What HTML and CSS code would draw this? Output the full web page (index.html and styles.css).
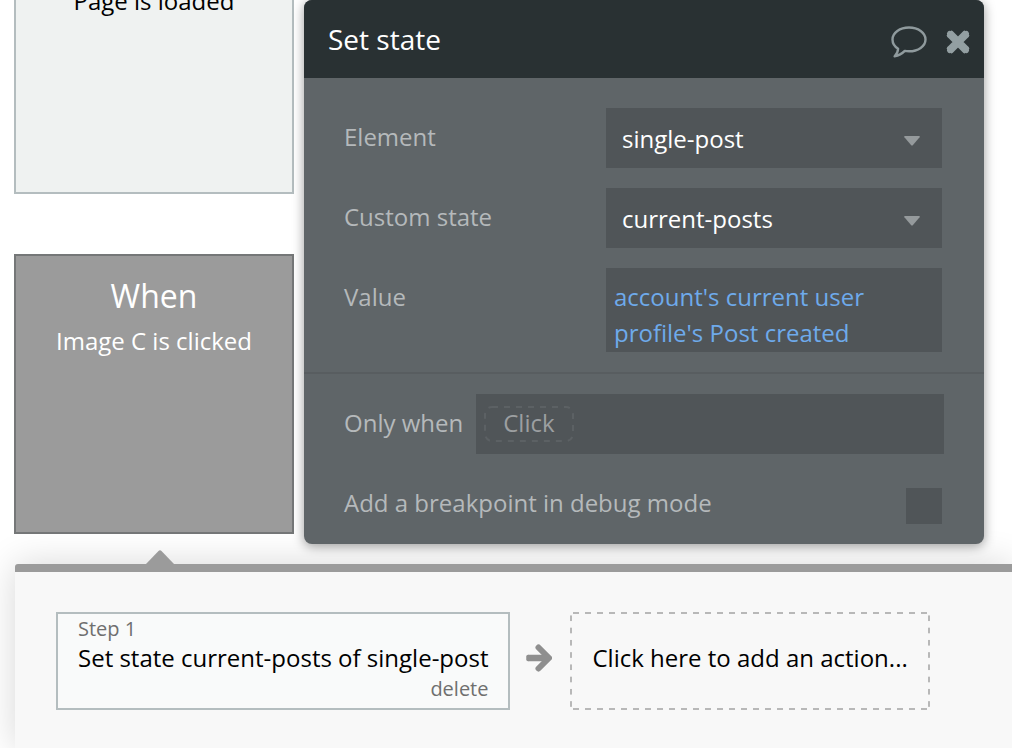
FILE: index.html
```html
<!DOCTYPE html>
<html lang="en">
<head>
<meta charset="utf-8">
<title>Workflow editor</title>
<link rel="stylesheet" href="styles.css">
</head>
<body>
<main class="workspace">
  <section class="events">
    <article class="event event-first">
      <p class="event-text">Page is loaded</p>
    </article>
    <article class="event event-selected">
      <h2 class="event-title">When</h2>
      <p class="event-text">Image C is clicked</p>
    </article>
  </section>

  <form class="editor">
    <header class="editor-header">
      <h1 class="editor-title">Set state</h1>
      <button class="icon-button" type="button" aria-label="Comment">
        <svg width="36" height="32" viewBox="0 0 36 32" fill="none" stroke="#8f9a9d" stroke-width="2.4" stroke-linejoin="round">
          <path d="M18 1.500C27.200 1.500 34.500 6.800 34.500 13.500S27.200 25.300 18 25.300c-1.500 0-2.900-.1-4.200-.4C11 27.800 7.600 29.600 3.600 30.300c1.900-1.700 3.300-4.300 3.500-7.500C3.600 20.600 1.500 17.200 1.500 13.500 1.500 6.800 8.800 1.500 18 1.500z"/>
        </svg>
      </button>
      <button class="icon-button" type="button" aria-label="Close">
        <svg width="26" height="26" viewBox="0 0 26 26" stroke="#939fa2" stroke-width="8">
          <path d="M5 5l16 16M21 5L5 21" stroke-linecap="butt"/>
          <path d="M4.500 4.500l17 17M21.500 4.500l-17 17" stroke-width="5" stroke-linecap="round"/>
          <path d="M3.500 6.500l3-3M19.500 3.500l3 3M22.500 19.500l-3 3M6.500 22.500l-3-3" stroke-width="3.600" stroke-linecap="round"/>
        </svg>
      </button>
    </header>

    <div class="fields">
      <div class="field">
        <label for="element">Element</label>
        <div class="select-wrap">
          <select id="element"><option>single-post</option></select>
          <svg class="caret" width="16" height="10" viewBox="0 0 16 10" fill="#959a9c"><path d="M1 0h14q1.500 0 .6 1.200L9 9q-1 1-2 0L.4 1.200Q-.5 0 1 0z"/></svg>
        </div>
      </div>
      <div class="field">
        <label for="state">Custom state</label>
        <div class="select-wrap">
          <select id="state"><option>current-posts</option></select>
          <svg class="caret" width="16" height="10" viewBox="0 0 16 10" fill="#959a9c"><path d="M1 0h14q1.500 0 .6 1.200L9 9q-1 1-2 0L.4 1.200Q-.5 0 1 0z"/></svg>
        </div>
      </div>
      <div class="field">
        <label for="value">Value</label>
        <textarea id="value" rows="2" spellcheck="false">account's current user profile's Post created</textarea>
      </div>
    </div>

    <div class="conditions">
      <div class="condition">
        <label for="only-when">Only when</label>
        <div class="expression">
          <button id="only-when" class="placeholder" type="button">
            <svg class="placeholder-outline" width="90" height="36" viewBox="0 0 90 36" fill="none" stroke="#5c6164" stroke-width="2" stroke-dasharray="6 6"><rect x="1" y="1" width="88" height="34" rx="7"/></svg>
            Click
          </button>
        </div>
      </div>
      <div class="breakpoint">
        <label for="breakpoint">Add a breakpoint in debug mode</label>
        <input id="breakpoint" class="checkbox" type="checkbox">
      </div>
    </div>
  </form>
</main>

<section class="steps">
  <svg class="pointer" width="28" height="14" viewBox="0 0 28 14" fill="#9b9b9b"><path d="M0 14L12.500 1q1.500-1.500 3 0L28 14z"/></svg>
  <article class="step">
    <span class="step-number">Step 1</span>
    <p class="step-title">Set state current-posts of single-post</p>
    <button class="step-delete" type="button">delete</button>
  </article>
  <svg class="arrow" width="26" height="28" viewBox="0 0 26 28" fill="none" stroke="#8f8f8f" stroke-width="6" stroke-linecap="round" stroke-linejoin="round">
    <path d="M12.500 3.500L23 14 12.500 24.500"/>
    <path d="M2 14h19" stroke-width="6.500" stroke-linecap="butt"/>
    <path d="M2 12.500v3" stroke-width="3.500"/>
  </svg>
  <button class="add-action" type="button">Click here to add an action...</button>
</section>
</body>
</html>
```

FILE: styles.css
```css
* {
  box-sizing: border-box;
}

body {
  display: flex;
  flex-direction: column;
  min-height: 100vh;
  margin: 0;
  overflow: hidden;
  background: #fff;
  color: #000;
  font-family: "Open Sans", sans-serif;
  font-size: 24px;
  line-height: 34px;
}

button,
select,
textarea {
  font: inherit;
}

h1,
h2,
p {
  margin: 0;
  font-weight: 400;
}

.workspace {
  display: flex;
  align-items: flex-start;
  gap: 10px;
  padding: 0 28px 20px 14px;
}

.events {
  display: flex;
  flex: 0 0 280px;
  flex-direction: column;
  gap: 60px;
  padding-bottom: 10px;
}

.event {
  height: 280px;
  border: 2px solid #b4bdbf;
  background: #eff2f1;
  text-align: center;
}

.event-first {
  height: 194px;
  border-top: 0;
}

.event-first .event-text {
  margin-top: -16px;
}

.event-selected {
  padding-top: 18px;
  border-color: #757778;
  background: #9b9b9b;
  color: #fff;
}

.event-title {
  margin-bottom: 6px;
  font-size: 32px;
  line-height: 44px;
}

.editor {
  position: relative;
  z-index: 2;
  flex: 1;
  overflow: hidden;
  border-radius: 8px;
  background: #5f6568;
  box-shadow: 0 2px 12px rgba(0, 0, 0, 0.4);
  color: #b5b9bb;
}

.editor-header {
  display: flex;
  align-items: center;
  gap: 18px;
  height: 78px;
  padding: 6px 13px 0 24px;
  background: #293133;
}

.editor-title {
  flex: 1;
  padding-bottom: 6px;
  color: #fff;
  font-size: 28px;
  line-height: 38px;
}

.icon-button {
  display: flex;
  padding: 0;
  border: 0;
  background: none;
}

.fields {
  display: grid;
  gap: 20px;
  padding: 30px 42px 20px 40px;
  border-bottom: 2px solid #585d60;
}

.field {
  display: grid;
  grid-template-columns: 262px 1fr;
}

label {
  line-height: 58px;
}

.select-wrap {
  display: grid;
  align-items: center;
}

.select-wrap > * {
  grid-area: 1 / 1;
}

select {
  width: 100%;
  height: 60px;
  padding: 2px 48px 0 16px;
  appearance: none;
  border: 0;
  border-radius: 0;
  background: #505558;
  color: #fff;
}

.caret {
  justify-self: end;
  margin: 6px 22px 0 0;
  pointer-events: none;
}

textarea {
  display: block;
  width: 100%;
  height: 84px;
  padding: 11px 8px 0;
  overflow: hidden;
  resize: none;
  border: 0;
  background: #505558;
  color: #6eaaeb;
  line-height: 36px;
}

.conditions {
  display: grid;
  gap: 20px;
  padding: 20px 40px 10px;
}

.condition {
  display: flex;
  gap: 13px;
}

.expression {
  flex: 1;
  height: 60px;
  padding: 12px 8px;
  background: #505558;
}

.placeholder {
  position: relative;
  display: block;
  height: 36px;
  padding: 0 19px 2px;
  border: 0;
  background: none;
  color: #9c9fa1;
  line-height: 34px;
}

.placeholder-outline {
  position: absolute;
  top: 0;
  left: 0;
}

.breakpoint {
  display: flex;
  align-items: flex-start;
  justify-content: space-between;
  height: 60px;
  padding-right: 2px;
}

.checkbox {
  width: 36px;
  height: 36px;
  margin: 14px 0 0;
  appearance: none;
  background: #505558;
}

.steps {
  position: relative;
  display: flex;
  flex: 1;
  align-items: flex-start;
  margin-left: 15px;
  padding: 40px 40px 38px 41px;
  border-top: 8px solid #9b9b9b;
  border-top-left-radius: 3px;
  background: #f8f8f8;
  box-shadow: 0 0 36px rgba(0, 0, 0, 0.16);
}

.pointer {
  position: absolute;
  top: -22px;
  left: 131px;
}

.step {
  display: flex;
  flex-direction: column;
  height: 98px;
  padding: 0 20px;
  border: 2px solid #b4bdbf;
  background: #f9fafa;
}

.step-number,
.step-delete {
  color: #6f6f6f;
  font-size: 20px;
  line-height: 30px;
}

.step-delete {
  align-self: flex-end;
  padding: 2px 0 0;
  border: 0;
  background: none;
}

.step-title {
  line-height: 28px;
  white-space: nowrap;
}

.arrow {
  flex: none;
  align-self: flex-start;
  margin: 32px 18px 0 16px;
}

.add-action {
  --dash: #b8b8b8 3px, transparent 3px, transparent 9px, #b8b8b8 9px;
  height: 98px;
  padding: 0 22px 7px;
  border: 0;
  background:
    linear-gradient(90deg, var(--dash)) top / 12px 2px round no-repeat,
    linear-gradient(90deg, var(--dash)) bottom / 12px 2px round no-repeat,
    linear-gradient(var(--dash)) left / 2px 12px no-repeat round,
    linear-gradient(var(--dash)) right / 2px 12px no-repeat round;
  color: #000;
  white-space: nowrap;
}
```
